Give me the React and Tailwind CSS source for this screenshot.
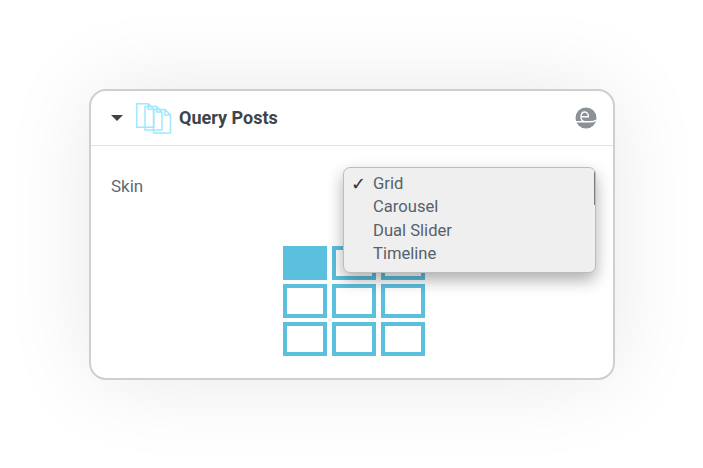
import React from 'react';

const skins = ['Grid', 'Carousel', 'Dual Slider', 'Timeline'];
const tiles = [0, 1, 2, 3, 4, 5, 6, 7, 8];

function PagesIcon() {
    const sheet = 'M0 0H11.5L17 5.5V23.5H0Z M11.5 0V5.5H17';
    return (
        <svg width="36" height="31" viewBox="0 0 36 31" fill="none" stroke="#a0e8fb" strokeWidth="1.5" className="shrink-0">
            <path d={sheet} transform="translate(.75 .75)" />
            <path d={sheet} transform="translate(9 3.5)" />
            <path d={sheet} transform="translate(17.5 6.5)" />
        </svg>
    );
}

function BrandIcon() {
    return (
        <svg width="22" height="22" viewBox="0 0 22 22" className="shrink-0">
            <circle cx="11" cy="11" r="10.5" fill="#8b9296" />
            <path d="M0 14.8H15C17.5 14.8 19.5 14.4 21 13.4" fill="none" stroke="#ffffff" strokeWidth="1.4" />
            <path d="M6.4 9.8H13.4C13.6 7 12 5 9.8 5C7.6 5 6 7 6 9.8C6 12.6 7.4 14.4 9.4 14.8" fill="none" stroke="#ffffff" strokeWidth="1.4" />
        </svg>
    );
}

export default function App() {
    return (
        <div className="w-[703px] h-[468px] overflow-hidden bg-white pl-[89px] pt-[89px] font-['Roboto',sans-serif]">
            <div className="relative w-[526px] h-[291px] bg-white border-2 border-[#cfcfcf] rounded-[17px] shadow-[0_0_90px_rgba(0,0,0,0.09)]">
                {/* Header */}
                <div className="flex items-center h-[55px] border-b border-[#e4e4e4] pl-[20px] pr-[16px]">
                    <div className="w-0 h-0 border-x-[6px] border-x-transparent border-t-[6px] border-t-[#3c4348] mr-[13px]" />
                    <PagesIcon />
                    <h3 className="ml-[7px] pb-[2px] text-[18px] font-bold text-[#3e444a]">Query Posts</h3>
                    <div className="ml-auto">
                        <BrandIcon />
                    </div>
                </div>

                {/* Skin row */}
                <div className="pl-[20px] pt-[31px] text-[17px] leading-[19px] text-[#5d6b73]">Skin</div>

                {/* Layout preview */}
                <div className="grid grid-cols-[44px_44px_44px] auto-rows-[34px] gap-x-[5px] gap-y-[4px] w-fit ml-[192px] mt-[50px]">
                    {tiles.map(t => (
                        <div key={t} className={`border-4 border-[#5bbfde] ${t === 0 ? 'bg-[#5bbfde]' : 'bg-white'}`} />
                    ))}
                </div>

                {/* Open select menu */}
                <div className="absolute left-[252px] top-[76px] w-[253px] h-[106px] bg-[#efefef] border border-[#bdbdbd] rounded-[7px] shadow-[0_7px_16px_rgba(0,0,0,0.32)] overflow-hidden pt-[4px] text-[16.6px] leading-[23.3px] text-[#56616b]">
                    <div className="absolute right-0 top-[2px] w-[1.5px] h-[35px] bg-[#7d7d7d]" />
                    {skins.map((s, i) => (
                        <div key={s} className="flex items-center">
                            <span className="w-[29px] pl-[7px] text-[18px] font-bold text-[#2f3338] font-['DejaVu_Sans',sans-serif]">{i === 0 ? '✓' : ''}</span>
                            <span>{s}</span>
                        </div>
                    ))}
                </div>
            </div>
        </div>
    );
}
